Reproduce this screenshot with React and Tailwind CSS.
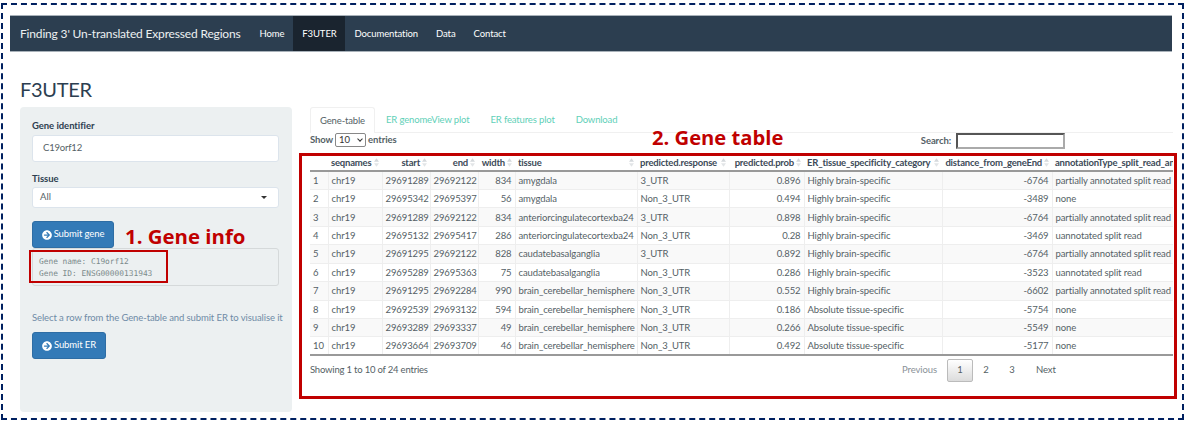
import { FaArrowCircleRight } from "react-icons/fa";

const rows = [
  ["1", "29691289", "29692122", "834", "amygdala", "3_UTR", "0.896", "Highly brain-specific", "-6764", "partially annotated split read"],
  ["2", "29695342", "29695397", "56", "amygdala", "Non_3_UTR", "0.494", "Highly brain-specific", "-3489", "none"],
  ["3", "29691289", "29692122", "834", "anteriorcingulatecortexba24", "3_UTR", "0.898", "Highly brain-specific", "-6764", "partially annotated split read"],
  ["4", "29695132", "29695417", "286", "anteriorcingulatecortexba24", "Non_3_UTR", "0.28", "Highly brain-specific", "-3469", "uannotated split read"],
  ["5", "29691295", "29692122", "828", "caudatebasalganglia", "3_UTR", "0.892", "Highly brain-specific", "-6764", "partially annotated split read"],
  ["6", "29695289", "29695363", "75", "caudatebasalganglia", "Non_3_UTR", "0.286", "Highly brain-specific", "-3523", "uannotated split read"],
  ["7", "29691295", "29692284", "990", "brain_cerebellar_hemisphere", "Non_3_UTR", "0.552", "Highly brain-specific", "-6602", "partially annotated split read"],
  ["8", "29692539", "29693132", "594", "brain_cerebellar_hemisphere", "Non_3_UTR", "0.186", "Absolute tissue-specific", "-5754", "none"],
  ["9", "29693289", "29693337", "49", "brain_cerebellar_hemisphere", "Non_3_UTR", "0.266", "Absolute tissue-specific", "-5549", "none"],
  ["10", "29693664", "29693709", "46", "brain_cerebellar_hemisphere", "Non_3_UTR", "0.492", "Absolute tissue-specific", "-5177", "none"],
];

const columns = [
  { label: "", width: 18 },
  { label: "seqnames", width: 54 },
  { label: "start", width: 48, right: true },
  { label: "end", width: 48, right: true },
  { label: "width", width: 37, right: true },
  { label: "tissue", width: 122 },
  { label: "predicted.response", width: 92 },
  { label: "predicted.prob", width: 75, right: true },
  { label: "ER_tissue_specificity_category", width: 138 },
  { label: "distance_from_geneEnd", width: 110, right: true },
  { label: "annotationType_split_read_annotation", width: 200 },
];

function SortIcon() {
  return (
    <svg className="absolute right-[3px] top-[3px]" width="5" height="9" viewBox="0 0 6 10" aria-hidden="true">
      <path d="M3 0 6 4H0z" fill="#d5d9dc" />
      <path d="M3 10 0 6h6z" fill="#e2e5e7" />
    </svg>
  );
}

function GeneTable() {
  return (
    <div className="w-[863px] overflow-hidden">
      <table className="table-fixed w-[942px] border-collapse text-[9.5px] tracking-[-0.1px] leading-[13px] text-[#555f66]">
        <colgroup>
          {columns.map((col) => (
            <col key={col.label} style={{ width: col.width }} />
          ))}
        </colgroup>
        <thead>
          <tr className="h-[16px] border-b-2 border-[#999]">
            {columns.map((col) => (
              <th
                key={col.label}
                className={`relative pl-[3px] pr-[10px] font-bold tracking-[-0.2px] text-[#3c4a58] whitespace-nowrap overflow-hidden ${col.right ? "text-right" : "text-left"}`}
              >
                {col.label}
                {col.label && <SortIcon />}
              </th>
            ))}
          </tr>
        </thead>
        <tbody>
          {rows.map((row, i) => (
            <tr key={row[0]} className={`h-[18.45px] border-b border-[#eee] ${i % 2 === 0 ? "bg-[#f9f9f9]" : "bg-white"} ${i === 9 ? "border-b-2 border-b-[#999]" : ""}`}>
              <td className="px-[3px] border-r border-[#eee]">{row[0]}</td>
              <td className="px-[3px] border-r border-[#eee]">chr19</td>
              <td className="px-[3px] border-r border-[#eee] text-right">{row[1]}</td>
              <td className="px-[3px] border-r border-[#eee] text-right">{row[2]}</td>
              <td className="px-[3px] border-r border-[#eee] text-right">{row[3]}</td>
              <td className="px-[3px] border-r border-[#eee] whitespace-nowrap">{row[4]}</td>
              <td className="px-[3px] border-r border-[#eee]">{row[5]}</td>
              <td className="px-[3px] border-r border-[#eee] text-right">{row[6]}</td>
              <td className="px-[3px] border-r border-[#eee] whitespace-nowrap">{row[7]}</td>
              <td className="px-[3px] border-r border-[#eee] text-right">{row[8]}</td>
              <td className="px-[3px] whitespace-nowrap">{row[9]}</td>
            </tr>
          ))}
        </tbody>
      </table>
    </div>
  );
}

function SubmitButton({ children, className }) {
  return (
    <button type="button" className={`h-[27px] flex items-center justify-center gap-[2px] rounded-[3px] bg-[#337ab7] border border-[#2e6da4] text-white text-[9.5px] tracking-[-0.1px] ${className}`}>
      <FaArrowCircleRight className="text-[10px]" />
      {children}
    </button>
  );
}

function Sidebar() {
  return (
    <aside className="w-[272px] h-[305px] shrink-0 rounded-[4px] bg-[#ecf0f1] pt-[13px] px-[12px] text-[#2c3e50]">
      <label className="block text-[9.5px] leading-[12px] tracking-[-0.05px] font-bold">Gene identifier</label>
      <div className="mt-[3px] w-[247px] h-[27px] flex items-center pl-[10px] rounded-[3px] bg-white border border-[#dce4ec] text-[9.5px] tracking-[-0.2px] text-[#555f66]">C19orf12</div>
      <label className="block mt-[11px] text-[9.5px] leading-[12px] tracking-[-0.05px] font-bold">Tissue</label>
      <div className="mt-[2px] w-[247px] h-[21px] flex items-center justify-between pl-[7px] pr-[11px] rounded-[3px] bg-white border border-[#dce4ec] text-[9.5px] text-[#555f66]">
        All
        <span className="w-0 h-0 border-x-[3px] border-t-[3px] border-x-transparent border-t-[#333]" />
      </div>
      <SubmitButton className="mt-[13px] w-[82px]">Submit gene</SubmitButton>
      <pre className="w-[247px] h-[38px] rounded-[3px] border border-[#d5d9da] bg-[#ecf0f1] pt-[7px] pl-[6px] font-['DejaVu_Sans_Mono',monospace] text-[7.85px] leading-[12.3px] text-[#7b8a8b]">
        {"Gene name: C19orf12\nGene ID: ENSG00000131943"}
      </pre>
      <p className="mt-[26px] text-[9.5px] tracking-[-0.1px] leading-[12px] whitespace-nowrap text-[#6f8ba6]">Select a row from the Gene-table and submit ER to visualise it</p>
      <SubmitButton className="mt-[8px] w-[74px]">Submit ER</SubmitButton>
    </aside>
  );
}

function Pagination() {
  return (
    <div className="flex items-center text-[9.5px] tracking-[-0.1px] text-[#555f66]">
      <span className="mr-[10px] text-[#8a9298]">Previous</span>
      <span className="w-[26px] h-[23px] flex items-center justify-center rounded-[2px] border border-[#bbb] bg-gradient-to-b from-white to-[#dcdcdc]">1</span>
      <span className="ml-[10px] w-[6px] text-center">2</span>
      <span className="ml-[20px] w-[6px] text-center">3</span>
      <span className="ml-[21px] w-[20px]">Next</span>
    </div>
  );
}

export default function App() {
  return (
    <div className="relative w-[1186px] h-[422px] bg-white font-['Lato',sans-serif] overflow-hidden">
      <div className="ml-[1px] mt-[3px] w-[1183px] h-[417px] border-2 border-dashed border-[#002060]">
        <nav className="ml-[7px] mt-[10px] w-[1162px] h-[37px] flex items-center bg-[#2c3e50] border-y border-[#a9b2ba] text-white text-[9.5px] tracking-[-0.1px]">
          <span className="ml-[10px] mr-[19px] pt-[1px] text-[12px] tracking-[-0.17px] text-[#ecf0f1] whitespace-nowrap">Finding 3' Un-translated Expressed Regions</span>
          <span className="pt-[1px]">Home</span>
          <span className="ml-[9px] h-full w-[52px] pt-[1px] flex items-center justify-center bg-[#1a242f]">F3UTER</span>
          <span className="ml-[9px] pt-[1px]">Documentation</span>
          <span className="ml-[18px] pt-[1px]">Data</span>
          <span className="ml-[18px] pt-[1px]">Contact</span>
        </nav>
        <h1 className="ml-[17px] mt-[25px] text-[20px] tracking-[-0.3px] leading-[24px] text-[#2c3e50]">F3UTER</h1>
        <div className="ml-[17px] mt-[6px] flex gap-[18px]">
          <Sidebar />
          <section className="w-[863px]">
            <div className="flex h-[26px] border-b border-[#f0f0f0] text-[9.5px] tracking-[-0.15px] text-[#5fd0b8]">
              <span className="w-[65px] h-[26px] pt-[1px] flex items-center justify-center rounded-t-[3px] border border-b-0 border-[#f0f0f0] bg-white text-[#555f66]">Gene-table</span>
              <span className="ml-[11px] self-center pt-[1px]">ER genomeView plot</span>
              <span className="ml-[21px] self-center pt-[1px]">ER features plot</span>
              <span className="ml-[21px] self-center pt-[1px]">Download</span>
            </div>
            <div className="flex items-start h-[22px] text-[9.5px] leading-[14px] tracking-[-0.1px] text-[#555f66]">
              <span className="font-bold">Show</span>
              <span className="mx-[2px] w-[31px] h-[14px] flex items-center justify-between px-[3px] rounded-[2px] border border-[#888] text-[#333]">
                10
                <span className="w-[4px] h-[4px] -mt-[2px] border-r border-b border-[#333] rotate-45" />
              </span>
              <span className="font-bold">entries</span>
              <span className="ml-auto pt-[1px] font-bold">Search:</span>
              <span className="ml-[5px] mr-[108px] w-[109px] h-[16px] border-2 border-[#555] border-r-[#aaa] border-b-[#aaa]" />
            </div>
            <GeneTable />
            <div className="flex items-center justify-between h-[28px] pr-[117px] text-[9.5px] tracking-[-0.2px] text-[#555f66]">
              <span>Showing 1 to 10 of 24 entries</span>
              <Pagination />
            </div>
          </section>
        </div>
      </div>
      <span className="absolute left-[125px] top-[222px] text-[20.4px] leading-[28px] font-bold text-[#c00000] font-['Open_Sans',sans-serif] whitespace-nowrap">1. Gene info</span>
      <div className="absolute left-[29px] top-[250px] w-[139px] h-[33px] border-2 border-[#c00000]" />
      <span className="absolute left-[652px] top-[123px] text-[20.2px] leading-[28px] font-bold text-[#c00000] font-['Open_Sans',sans-serif] whitespace-nowrap">2. Gene table</span>
      <div className="absolute left-[299px] top-[153px] w-[878px] h-[246px] border-[3px] border-[#c00000]" />
    </div>
  );
}
